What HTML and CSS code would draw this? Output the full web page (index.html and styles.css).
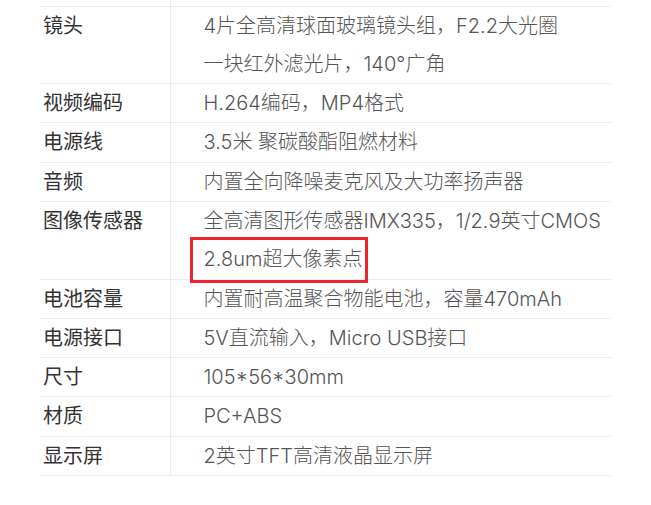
FILE: index.html
```html
<!DOCTYPE html>
<html lang="zh-CN">
<head>
    <meta charset="UTF-8">
    <meta name="viewport" content="width=device-width, initial-scale=1.0">
    <title>产品参数</title>
    <link rel="stylesheet" href="styles.css">
</head>
<body>

    <table class="spec-table">
        <tr class="spec-cut">
            <th></th>
            <td></td>
        </tr>
        <tr>
            <th>镜头</th>
            <td>4片全高清球面玻璃镜头组，F2.2大光圈<br>一块红外滤光片，140°广角</td>
        </tr>
        <tr>
            <th>视频编码</th>
            <td>H.264编码，MP4格式</td>
        </tr>
        <tr>
            <th>电源线</th>
            <td>3.5米 聚碳酸酯阻燃材料</td>
        </tr>
        <tr>
            <th>音频</th>
            <td>内置全向降噪麦克风及大功率扬声器</td>
        </tr>
        <tr>
            <th>图像传感器</th>
            <td>全高清图形传感器IMX335，1/2.9英寸CMOS<br><span class="mark">2.8um超大像素点</span></td>
        </tr>
        <tr>
            <th>电池容量</th>
            <td>内置耐高温聚合物能电池，容量470mAh</td>
        </tr>
        <tr>
            <th>电源接口</th>
            <td>5V直流输入，Micro USB接口</td>
        </tr>
        <tr>
            <th>尺寸</th>
            <td>105*56*30mm</td>
        </tr>
        <tr>
            <th>材质</th>
            <td>PC+ABS</td>
        </tr>
        <tr>
            <th>显示屏</th>
            <td>2英寸TFT高清液晶显示屏</td>
        </tr>
    </table>

</body>
</html>
```

FILE: styles.css
```css
* {
    margin: 0;
    padding: 0;
    box-sizing: border-box;
}

body {
    background: #ffffff;
    font-family: "Liberation Sans", "Noto Sans CJK SC", sans-serif;
    font-size: 20px;
    overflow: hidden;
}

.spec-table {
    margin-left: 40px;
    width: 571px;
    border-collapse: collapse;
    line-height: 38.3px;
}

.spec-table th,
.spec-table td {
    text-align: left;
    vertical-align: top;
    border-bottom: 1px solid #ececec;
    white-space: nowrap;
}

.spec-table th {
    width: 130px;
    padding-left: 3px;
    font-weight: normal;
    color: #333333;
    border-right: 1px solid #ececec;
}

.spec-table td {
    padding-left: 33px;
    font-family: Inter, "Noto Sans CJK SC", sans-serif;
    font-weight: 300;
    color: #555555;
}

/* cropped row above the visible part */
.spec-cut th,
.spec-cut td {
    height: 6px;
    line-height: 5px;
}

/* red highlight box */
.mark {
    display: inline-block;
    position: relative;
}

.mark::after {
    content: "";
    position: absolute;
    left: -14px;
    right: -6px;
    top: -3px;
    bottom: -4px;
    border: 3px solid #e8262b;
}
```
